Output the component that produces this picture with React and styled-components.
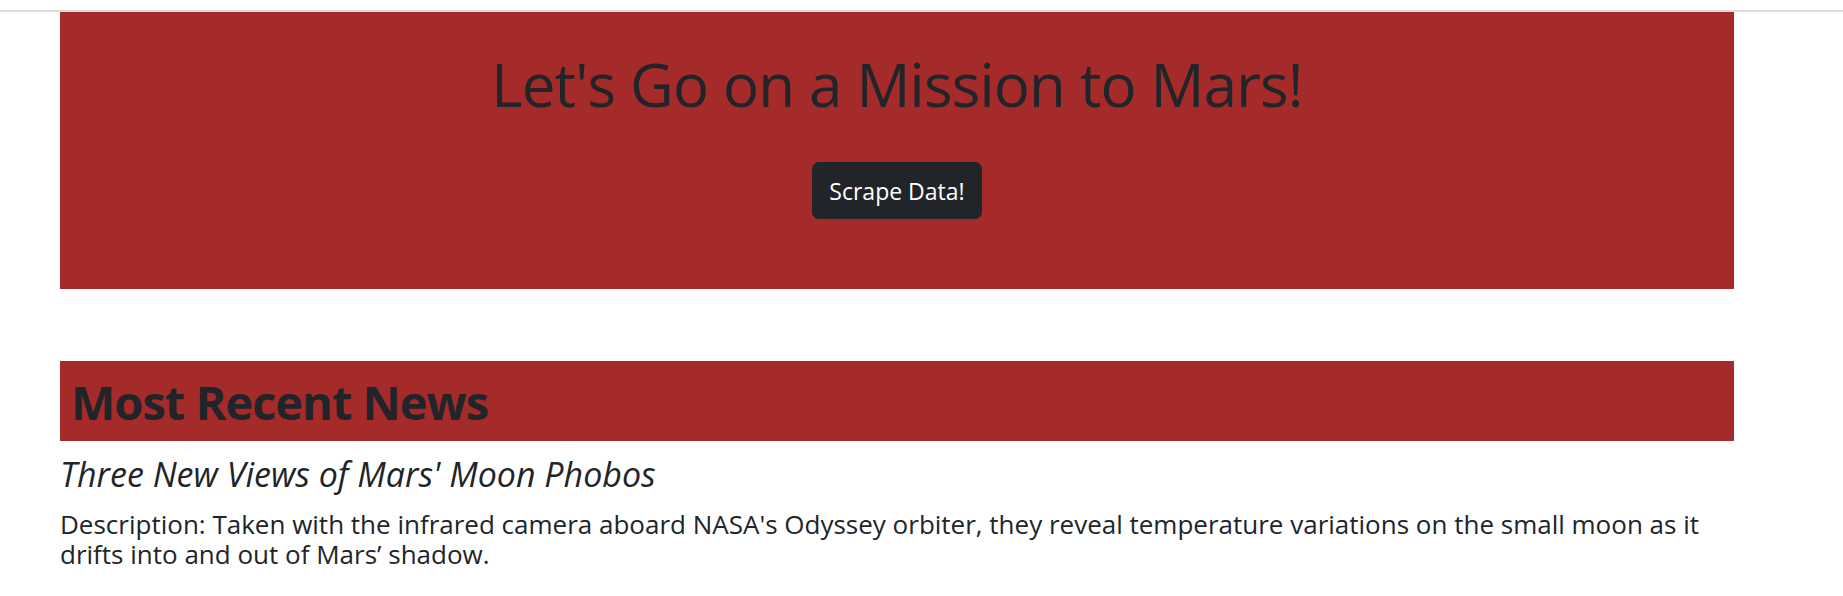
import styled, { createGlobalStyle } from "styled-components"

const GlobalStyle = createGlobalStyle`
    html, body {
        margin: 0;
        padding: 0;
        background: #fff;
    }
    body {
        font-family: "Open Sans", "Noto Sans", sans-serif;
        color: #212529;
    }
`

const Pagina = styled.div`
    padding-top: 10px;
`

const LinhaTopo = styled.div`
    height: 2px;
    background: #dcdcdc;
`

const Conteudo = styled.main`
    width: 1674px;
    margin-left: 60px;
`

const Jumbotron = styled.section`
    background: #a52a2a;
    display: flex;
    flex-direction: column;
    align-items: center;
    padding: 36px 0 70px;
`

const Titulo = styled.h1`
    margin: 0;
    font-size: 60px;
    font-weight: 400;
    letter-spacing: -0.8px;
    line-height: 1.2;
    color: #212529;
`

const BotaoScrape = styled.button`
    margin-top: 42px;
    height: 57px;
    padding: 0 17px;
    border: none;
    border-radius: 7px;
    background: #212529;
    color: #fff;
    font-family: inherit;
    font-size: 23px;
    cursor: pointer;
`

const Secao = styled.section`
    margin-top: 72px;
`

const Faixa = styled.div`
    background: #a52a2a;
    padding: 13px 11px 11px;
`

const TituloSecao = styled.h1`
    margin: 0;
    font-size: 47px;
    font-weight: 700;
    letter-spacing: -1px;
    line-height: 1.2;
`

const Manchete = styled.h3`
    margin: 13px 0 0;
    font-size: 34px;
    font-style: italic;
    font-weight: 500;
    line-height: 1.2;
`

const Descricao = styled.p`
    margin: 14px 0 0;
    font-size: 26px;
    line-height: 30px;
`

function App() {
    const noticia = {
        titulo: "Three New Views of Mars' Moon Phobos",
        texto: "Taken with the infrared camera aboard NASA's Odyssey orbiter, they reveal temperature variations on the small moon as it drifts into and out of Mars\u2019 shadow."
    }

    return (
        <Pagina>
            <GlobalStyle />
            <LinhaTopo />
            <Conteudo>
                <Jumbotron>
                    <Titulo>Let's Go on a Mission to Mars!</Titulo>
                    <BotaoScrape>Scrape Data!</BotaoScrape>
                </Jumbotron>
                <Secao>
                    <Faixa>
                        <TituloSecao>Most Recent News</TituloSecao>
                    </Faixa>
                    <Manchete>{noticia.titulo}</Manchete>
                    <Descricao>Description: {noticia.texto}</Descricao>
                </Secao>
            </Conteudo>
        </Pagina>
    )
}

export default App
